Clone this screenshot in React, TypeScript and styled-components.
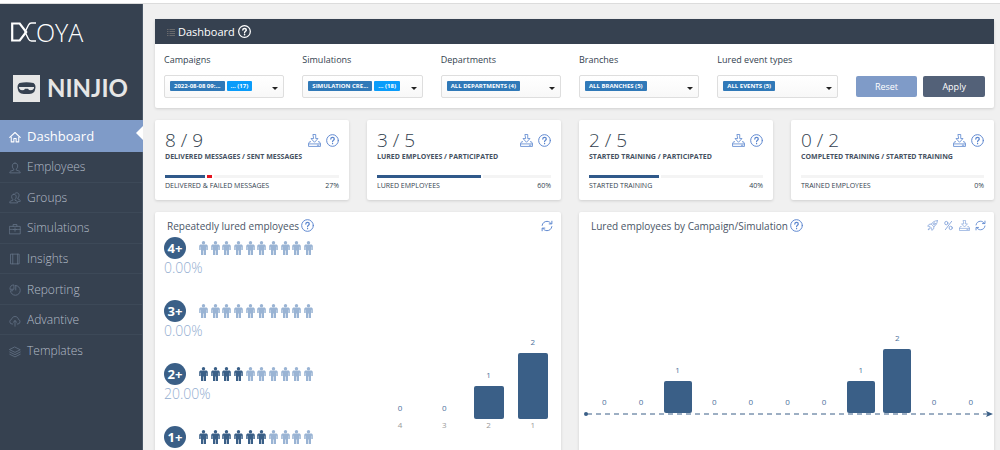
import React from "react";
import styled, { createGlobalStyle } from "styled-components";

const navy = "#364150";
const accent = "#7f9bc8";
const bar = "#3a5f87";
const iconBlue = "#5b86cf";

const GlobalStyle = createGlobalStyle`
  * { box-sizing: border-box; }
  body { margin: 0; background: #f0f0f0; font-family: "Open Sans", sans-serif; color: #333f4f; }
  h1, h2, p, ul { margin: 0; padding: 0; font-weight: 400; }
  ul { list-style: none; }
  button { font: inherit; border: 0; padding: 0; background: none; cursor: pointer; }
  svg { display: block; flex: none; }
`;

const Page = styled.div`
  height: 100vh;
  overflow: hidden;
  display: flex;
  flex-direction: column;
`;
const TopStrip = styled.div`
  flex: none;
  height: 4px;
  background: #fff;
  border-bottom: 1px solid #dcdcdc;
`;
const Body = styled.div`
  flex: 1;
  min-height: 0;
  display: flex;
`;
const Sidebar = styled.aside`
  flex: none;
  width: 143px;
  background: ${navy};
  border-right: 1px solid #4b5868;
`;
const Brand = styled.div`
  height: 50px;
  padding: 6px 11px 0;
  display: flex;
  align-items: center;
`;
const BrandLetters = styled.span`
  font-size: 25px;
  font-weight: 300;
  line-height: 26px;
  color: #fff;
`;
const Client = styled.div`
  height: 66px;
  padding: 2px 13px 0;
  display: flex;
  align-items: center;
  gap: 7px;
  color: #e6e6e6;
  font: 700 24px/28px Lato, sans-serif;
`;
const NavList = styled.ul`
  display: grid;
  grid-template-rows: 32px;
  grid-auto-rows: 1fr;
  min-height: 246px;
`;
const NavItem = styled.li<{ $active?: boolean }>`
  position: relative;
  border-bottom: 1px solid ${(p) => (p.$active ? accent : "#3d4958")};
  background: ${(p) => (p.$active ? accent : "transparent")};
  color: ${(p) => (p.$active ? "#fff" : "#67758a")};
  margin-right: ${(p) => (p.$active ? "-1px" : "0")};
  &:last-child { border-bottom: 0; }
`;
const NavLink = styled.a<{ $active?: boolean }>`
  height: 100%;
  padding-left: 9px;
  display: flex;
  align-items: center;
  gap: 6px;
  text-decoration: none;
  color: inherit;
  font-size: ${(p) => (p.$active ? 13 : 12)}px;
  font-weight: ${(p) => (p.$active ? 400 : 300)};
  svg { margin-top: 2px; }
  span { color: ${(p) => (p.$active ? "#fff" : "#b4bcc8")}; }
`;
const Pointer = styled.i`
  position: absolute;
  right: 0;
  top: 6px;
  border: 7px solid transparent;
  border-left: 0;
  border-right-color: #fff;
`;

const Main = styled.main`
  flex: 1;
  min-width: 0;
  padding: 15px 6px 0 12px;
  display: flex;
  flex-direction: column;
  gap: 12px;
`;
const Card = styled.section`
  background: #fff;
  border-radius: 2px;
  box-shadow: 0 1px 3px rgba(0, 0, 0, 0.14);
`;
const HeaderBar = styled.header`
  height: 25px;
  padding-left: 12px;
  display: flex;
  align-items: center;
  gap: 3px;
  background: ${navy};
  color: #fff;
  h1 { font-size: 11px; line-height: 16px; }
`;
const Filters = styled.form`
  display: grid;
  grid-template-columns: repeat(5, 120fr) 129fr;
  column-gap: 18px;
  align-items: end;
  padding: 9px 9px 10px;
`;
const Field = styled.label`
  display: flex;
  flex-direction: column;
  gap: 8px;
  font-size: 9px;
  line-height: 14px;
`;
const SelectBox = styled.div`
  position: relative;
  height: 23px;
`;
const Select = styled.select`
  appearance: none;
  width: 100%;
  height: 100%;
  border: 1px solid #dedede;
  border-radius: 2px;
  background: linear-gradient(#fff, #f8f8f8);
  color: transparent;
  font-size: 7px;
  option { color: #333f4f; }
`;
const Tags = styled.div`
  position: absolute;
  inset: 0;
  padding: 6px 6px 0 6px;
  display: flex;
  align-items: flex-start;
  gap: 2px;
  pointer-events: none;
`;
const Tag = styled.span<{ $more?: boolean }>`
  padding: 0 4px;
  border-radius: 1px;
  background: ${(p) => (p.$more ? "#0a9cfa" : "#3079b8")};
  color: #fff;
  font-size: 6px;
  font-weight: 700;
  line-height: 10px;
  white-space: nowrap;
`;
const Caret = styled.i`
  margin: 6px 0 0 auto;
  border: 3px solid transparent;
  border-bottom: 0;
  border-top-color: #222;
`;
const Actions = styled.div`
  display: flex;
  gap: 6px;
  padding-bottom: 1px;
`;
const Action = styled.button<{ $primary?: boolean }>`
  && {
    flex: 1;
    height: 21px;
    border-radius: 2px;
    background: ${(p) => (p.$primary ? "#536178" : accent)};
    color: #fff;
    font-size: 9px;
  }
`;

const StatRow = styled.div`
  display: grid;
  grid-template-columns: repeat(3, minmax(0, 194fr)) minmax(0, 203fr);
  gap: 18px;
`;
const StatCard = styled(Card)`
  height: 80px;
  padding: 9px 10px 0;
`;
const Between = styled.div`
  display: flex;
  justify-content: space-between;
`;
const Figure = styled.p`
  font-size: 19px;
  font-weight: 300;
  line-height: 22px;
`;
const Icons = styled.div<{ $gap: number }>`
  display: flex;
  align-items: center;
  gap: ${(p) => p.$gap}px;
  color: ${iconBlue};
  button { color: inherit; }
`;
const SoftButton = styled.button`
  opacity: 0.75;
`;
const Caption = styled.h2`
  && { font-size: 7px; font-weight: 700; }
  color: #465262;
  line-height: 12px;
  white-space: nowrap;
`;
const Track = styled.div`
  height: 3px;
  margin: 12px 0 3px;
  display: flex;
  gap: 2px;
  background: #f4f4f4;
`;
const Fill = styled.div<{ $color: string }>`
  background: ${(p) => p.$color};
  box-shadow: 2px 0 #fff;
`;
const Foot = styled(Between)`
  font-size: 7px;
  line-height: 10px;
`;

const PanelRow = styled.div`
  flex: 1;
  min-height: 0;
  display: grid;
  grid-template-columns: minmax(0, 406fr) minmax(0, 415fr);
  gap: 18px;
`;
const PanelHead = styled.div`
  height: 25px;
  padding: 2px 8px 0 12px;
  display: flex;
  align-items: center;
  justify-content: space-between;
`;
const PanelTitle = styled.div`
  display: flex;
  align-items: center;
  gap: 2px;
  color: ${iconBlue};
  h2 { font-size: 10px; line-height: 14px; color: #4a5567; }
`;
const LeftContent = styled.div`
  display: flex;
  justify-content: space-between;
  padding: 0 6px 0 9px;
`;
const RepeatItem = styled.li`
  height: 63px;
`;
const RepeatTop = styled.div`
  display: flex;
  align-items: center;
  gap: 13px;
`;
const Badge = styled.span`
  width: 22px;
  height: 22px;
  border-radius: 50%;
  background: ${bar};
  color: #fff;
  font-size: 13px;
  font-weight: 700;
  line-height: 22px;
  text-align: center;
`;
const People = styled.div`
  width: 114px;
  display: flex;
  justify-content: space-between;
`;
const Percent = styled.p`
  font-size: 14px;
  font-weight: 300;
  line-height: 18px;
  color: #93add0;
`;

const Columns = styled.div<{ $width?: string; $height: number }>`
  width: ${(p) => p.$width ?? "auto"};
  height: ${(p) => p.$height}px;
  display: grid;
  grid-auto-flow: column;
  grid-auto-columns: 1fr;
`;
const Column = styled.div`
  display: flex;
  flex-direction: column;
  align-items: center;
  justify-content: flex-end;
  font-size: 8px;
  line-height: 10px;
  color: #4d719c;
`;
const Bar = styled.div<{ $wide?: boolean }>`
  width: ${(p) => (p.$wide ? 30 : 28)}px;
  margin-top: 6px;
  border-radius: 2px;
  background: ${bar};
`;
const Tick = styled.span`
  margin-top: 1px;
  color: #999;
`;
const RightContent = styled.div`
  padding: 0 1px 0 7px;
`;
const CampaignPlot = styled.div`
  padding-right: 4px;
`;

type IconProps = { size?: number };
const Svg = ({ size = 12, sw = 1, children }: { size?: number; sw?: number; children: React.ReactNode }) => (
  <svg width={size} height={size} viewBox="0 0 16 16" fill="none" stroke="currentColor" strokeWidth={sw} strokeLinejoin="round" strokeLinecap="round" aria-hidden="true">
    {children}
  </svg>
);
const Help = ({ size = 13, sw = 1.2 }: { size?: number; sw?: number }) => (
  <Svg size={size} sw={sw}>
    <circle cx="8" cy="8" r="7.2" />
    <path d="M5.9 6.3c0-1.4 1-2.1 2.2-2.1s2.1.8 2.1 1.9c0 1.5-2.1 1.6-2.1 3.2M8.1 11.5v.5" strokeWidth={sw + 0.3} />
  </Svg>
);
const Download = ({ size = 13 }: IconProps) => (
  <Svg size={size} sw={1}>
    <path d="M6.500.6h3v5h2.800L8 10.200 3.700 5.600h2.800z" />
    <path d="M3.200 9.500H2L.7 11.800V15.300h14.600v-3.500L14 9.500h-1.200M.7 12.200h14.600M11.500 13.800h1.800" />
  </Svg>
);
const Refresh = ({ size = 12 }: IconProps) => (
  <Svg size={size} sw={1.3}>
    <path d="M1.5 7.2C2 3.9 4.700 1.800 8 1.800c2.400 0 4.400 1.200 5.500 3.100M14.500 8.800c-.5 3.300-3.200 5.400-6.500 5.400-2.400 0-4.400-1.200-5.500-3.100" />
    <path d="M14.500 1.600v3.600h-3.600M1.500 14.400v-3.600h3.600" />
  </Svg>
);
const Rocket = () => (
  <Svg size={11} sw={1.1}>
    <path d="M15 1c-4 0-6.700 1.800-8.800 5L3 6.300 1 9l3.200.3 2.500 2.500L7 15l2.700-2 .3-3.200C13.200 7.700 15 5 15 1zM3.700 11.200 1.500 14.500l3.300-2.200M6.200 6l3.800 3.800" />
    <circle cx="10.500" cy="5.500" r="1.500" />
  </Svg>
);
const PercentIcon = () => (
  <Svg size={11} sw={1.3}>
    <ellipse cx="4.800" cy="4.500" rx="2.300" ry="2.500" />
    <ellipse cx="11.200" cy="11.500" rx="2.300" ry="2.500" />
    <path d="M12.500 2 3.500 14" />
  </Svg>
);
const Person = ({ on }: { on: boolean }) => (
  <svg width="9" height="14" viewBox="0 0 9 14" fill={on ? bar : "#9ab4d4"} aria-hidden="true">
    <circle cx="4.500" cy="1.700" r="1.700" />
    <path d="M2 3.500h5c1 0 1.800.6 1.800 1.600V9H7.300V5.800H7V14H4.800V9.500h-.6V14H2V5.800h-.3V9H.2V5.100c0-1 .8-1.600 1.800-1.600z" />
  </svg>
);

const glyphs: Record<string, React.ReactNode> = {
  Dashboard: <path strokeWidth="1.400" d="M1 8.500 8 2l7 6.500M3 8v6.500h3.500V10h3v4.500H13V8" />,
  Employees: <path d="M8 1.500c-2.300 0-3.600 1.500-3.600 3.800 0 2 .7 3.300 1.900 4.200v1.300L2 12.300c-.7.300-1 .9-1 2.200h14c0-1.300-.3-1.900-1-2.200l-4.300-1.500V9.500c1.200-.9 1.900-2.200 1.900-4.200C11.600 3 10.300 1.500 8 1.500z" />,
  Groups: <path d="M6.500 3C4.600 3 3.500 4.300 3.500 6.200c0 1.700.6 2.800 1.600 3.600V11L1.800 12.200c-.6.300-.8.900-.8 2.300h10.500c0-1.400-.2-2-.8-2.300L8 11V9.800c1-.8 1.600-1.900 1.600-3.600C9.600 4.300 8.400 3 6.500 3zM8 2c.6-.6 1.300-.9 2.200-.9 2 0 3.200 1.300 3.200 3.300 0 1.700-.6 2.900-1.600 3.700v1.200l2.400 1c.6.300.8.900.8 2.200h-2.500" />,
  Simulations: <path d="M1 4.500h14v10H1zM5.500 4.500V2h5v2.500M1 8.500h5M10 8.500h5M8 6.500v4.500M6 8.700h4" />,
  Insights: <path d="M2.500 1.500h11v13h-11zM5 1.500v13M11.500 1.500v13" />,
  Reporting: <path d="M9 2a6.500 6.500 0 1 1-7 7h3M9 2v6M1.200 6.500A5.500 5.500 0 0 1 6.600 1.200v5.300z" />,
  Advantive: <path d="M5 12H4a3.200 3.200 0 0 1-.5-6.300C4 3.500 5.700 2 8 2c2.400 0 4.200 1.600 4.500 3.800A3.200 3.200 0 0 1 12 12h-1M8 15V7.500M5.700 9.700 8 7.500l2.300 2.200" />,
  Templates: <path d="M8 1.500 15 5 8 8.500 1 5zM1 8l7 3.500L15 8M1 11l7 3.500 7-3.500" />,
};

const filters = [
  { label: "Campaigns", tags: ["2022-08-08 09:...", "... (17)"] },
  { label: "Simulations", tags: ["SIMULATION CRE...", "... (18)"] },
  { label: "Departments", tags: ["ALL DEPARTMENTS (4)"] },
  { label: "Branches", tags: ["ALL BRANCHES (5)"] },
  { label: "Lured event types", tags: ["ALL EVENTS (5)"] },
];
const stats = [
  { figure: "8 / 9", caption: "DELIVERED MESSAGES / SENT MESSAGES", foot: "DELIVERED & FAILED MESSAGES", pct: "27%", fills: [[23, "#30598a"], [3, "#e5141f"]] },
  { figure: "3 / 5", caption: "LURED EMPLOYEES / PARTICIPATED", foot: "LURED EMPLOYEES", pct: "60%", fills: [[60, "#30598a"]] },
  { figure: "2 / 5", caption: "STARTED TRAINING / PARTICIPATED", foot: "STARTED TRAINING", pct: "40%", fills: [[40, "#30598a"]] },
  { figure: "0 / 2", caption: "COMPLETED TRAINING / STARTED TRAINING", foot: "TRAINED EMPLOYEES", pct: "0%", fills: [] },
] as { figure: string; caption: string; foot: string; pct: string; fills: [number, string][] }[];
const repeats = [
  { label: "4+", on: 0, pct: "0.00%" },
  { label: "3+", on: 0, pct: "0.00%" },
  { label: "2+", on: 4, pct: "20.00%" },
  { label: "1+", on: 6 },
];
const repeatBars = [[4, 0], [3, 0], [2, 1], [1, 2]];
const campaignBars = [0, 0, 1, 0, 0, 0, 0, 1, 2, 0, 0];

export default function App() {
  return (
    <Page>
      <GlobalStyle />
      <TopStrip />
      <Body>
        <Sidebar>
          <Brand>
            <svg width="25" height="20" viewBox="0 0 25 20" fill="none" stroke="#fff" aria-hidden="true">
              <path d="M1.200 1.500h7.500l6.500 8.500-6.500 8.500H1.200z" strokeWidth="2.200" />
              <path d="M25 1h-4.500c-1.500 0-2.500 1-3 2L14 10l3.500 7c.5 1 1.500 2 3 2H25" strokeWidth="1.400" />
            </svg>
            <BrandLetters>OYA</BrandLetters>
          </Brand>
          <Client>
            <svg width="27" height="27" viewBox="0 0 27 27" aria-hidden="true">
              <path fill="#e6e6e6" d="M0 0h27v27H0z" />
              <path fill={navy} d="M6.500 8q7-1.500 14 0 3 2 1.500 7-.5 3-3 3.500-5.500 1-11 0-2.500-.5-3-3.500-1.500-5 1.500-7z" />
              <path fill="#e6e6e6" d="M6 12h15v1.200q-1 2-3 2-2.500 0-3-1.500h-3q-.5 1.500-3 1.500-2 0-3-2z" />
            </svg>
            NINJIO
          </Client>
          <nav>
            <NavList>
              {Object.keys(glyphs).map((name, i) => (
                <NavItem key={name} $active={i === 0}>
                  <NavLink href="#" $active={i === 0}>
                    <Svg size={12}>{glyphs[name]}</Svg>
                    <span>{name}</span>
                  </NavLink>
                  {i === 0 && <Pointer />}
                </NavItem>
              ))}
            </NavList>
          </nav>
        </Sidebar>

        <Main>
          <Card>
            <HeaderBar>
              <svg width="8" height="8" viewBox="0 0 8 8" fill="#68696c" aria-hidden="true">
                <path d="M0 1h1.500v1H0zM2.500 1H8v1H2.500zM0 3h1.500v1H0zM2.500 3H8v1H2.500zM0 5h1.500v1H0zM2.500 5H8v1H2.500zM0 7h1.500v1H0zM2.500 7H8v1H2.500z" />
              </svg>
              <h1>Dashboard</h1>
              <Help size={13} sw={1.500} />
            </HeaderBar>
            <Filters onSubmit={(e) => e.preventDefault()}>
              {filters.map((f) => (
                <Field key={f.label}>
                  {f.label}
                  <SelectBox>
                    <Select>
                      <option>{f.tags[0]}</option>
                    </Select>
                    <Tags aria-hidden="true">
                      {f.tags.map((t, i) => (
                        <Tag key={t} $more={i > 0}>{t}</Tag>
                      ))}
                      <Caret />
                    </Tags>
                  </SelectBox>
                </Field>
              ))}
              <Actions>
                <Action type="reset">Reset</Action>
                <Action type="submit" $primary>Apply</Action>
              </Actions>
            </Filters>
          </Card>

          <StatRow>
            {stats.map((s) => (
              <StatCard key={s.caption}>
                <Between>
                  <Figure>{s.figure}</Figure>
                  <Icons $gap={5}>
                    <button type="button" aria-label="Download"><Download /></button>
                    <button type="button" aria-label="Help"><Help /></button>
                  </Icons>
                </Between>
                <Caption>{s.caption}</Caption>
                <Track>
                  {s.fills.map(([w, c]) => (
                    <Fill key={c} $color={c} style={{ width: `${w}%` }} />
                  ))}
                </Track>
                <Foot>
                  <span>{s.foot}</span>
                  <span>{s.pct}</span>
                </Foot>
              </StatCard>
            ))}
          </StatRow>

          <PanelRow>
            <Card>
              <PanelHead>
                <PanelTitle>
                  <h2>Repeatedly lured employees</h2>
                  <Help />
                </PanelTitle>
                <Icons $gap={5}>
                  <button type="button" aria-label="Refresh"><Refresh /></button>
                </Icons>
              </PanelHead>
              <LeftContent>
                <ul>
                  {repeats.map((r) => (
                    <RepeatItem key={r.label}>
                      <RepeatTop>
                        <Badge>{r.label}</Badge>
                        <People>
                          {Array.from({ length: 10 }, (_, i) => (
                            <Person key={i} on={i < r.on} />
                          ))}
                        </People>
                      </RepeatTop>
                      {r.pct && <Percent>{r.pct}</Percent>}
                    </RepeatItem>
                  ))}
                </ul>
                <Columns $width="177px" $height={193}>
                  {repeatBars.map(([n, v]) => (
                    <Column key={n}>
                      {v}
                      <Bar $wide style={{ height: v * 33 }} />
                      <Tick>{n}</Tick>
                    </Column>
                  ))}
                </Columns>
              </LeftContent>
            </Card>

            <Card>
              <PanelHead>
                <PanelTitle>
                  <h2>Lured employees by Campaign/Simulation</h2>
                  <Help />
                </PanelTitle>
                <Icons $gap={5}>
                  <SoftButton type="button" aria-label="Campaigns"><Rocket /></SoftButton>
                  <SoftButton type="button" aria-label="Percent"><PercentIcon /></SoftButton>
                  <SoftButton type="button" aria-label="Download"><Download size={11} /></SoftButton>
                  <button type="button" aria-label="Refresh"><Refresh size={11} /></button>
                </Icons>
              </PanelHead>
              <RightContent>
                <CampaignPlot>
                  <Columns $height={176}>
                    {campaignBars.map((v, i) => (
                      <Column key={i}>
                        {v}
                        <Bar style={{ height: v * 32 }} />
                      </Column>
                    ))}
                  </Columns>
                </CampaignPlot>
                <svg width="100%" height="5" overflow="visible" aria-hidden="true">
                  <circle cx="0" cy="1" r="2" fill={bar} />
                  <line x1="1" y1="1" x2="99%" y2="1" stroke={bar} strokeWidth="1" strokeDasharray="5 4" />
                  <svg x="100%" overflow="visible">
                    <path d="M-7-2 0 1-7 4l1.500-3z" fill={bar} />
                  </svg>
                </svg>
              </RightContent>
            </Card>
          </PanelRow>
        </Main>
      </Body>
    </Page>
  );
}
